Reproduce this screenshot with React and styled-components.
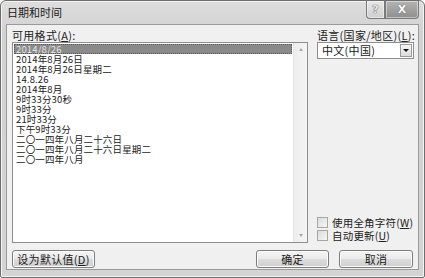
import React from "react";
import styled, { createGlobalStyle } from "styled-components";

const Global = createGlobalStyle`
  html, body { margin: 0; padding: 0; background: #ffffff; }
  body { font-family: "Noto Sans CJK SC", "Liberation Sans", sans-serif; }
  * { box-sizing: border-box; }
`;

const Window = styled.div`
  width: 425px;
  height: 278px;
  border: 1px solid #6e6e6e;
  border-radius: 6px 6px 2px 2px;
  background: linear-gradient(#dedede, #d2d2d2 30px, #d4d4d4);
  display: flex;
  flex-direction: column;
  box-shadow: inset 0 0 0 1px #f4f4f4;
`;

const TitleBar = styled.div`
  height: 23px;
  display: flex;
  align-items: flex-start;
  padding-left: 6px;
`;

const Title = styled.div`
  font-size: 11px;
  line-height: 12px;
  color: #1a1a1a;
  margin-top: 5px;
`;

const Controls = styled.div`
  margin-left: auto;
  margin-right: 5px;
  display: flex;
`;

const CapButton = styled.div`
  width: ${(p) => p.$w}px;
  height: 18px;
  border: 1px solid #7a7a7a;
  border-top: none;
  background: ${(p) => p.$bg};
  display: flex;
  align-items: center;
  justify-content: center;
  border-radius: ${(p) => p.$r};
  box-shadow: inset 0 0 0 1px rgba(255,255,255,0.45);
  font-family: "DejaVu Sans", sans-serif;
  font-weight: bold;
  font-size: ${(p) => p.$fs}px;
  line-height: 12px;
  color: ${(p) => p.$c};
  text-shadow: ${(p) => p.$ts};
`;

const Client = styled.div`
  flex: 1;
  margin: 0 5px 7px 5px;
  background: #f0f0f0;
  border: 1px solid #9a9a9a;
  padding: 2px 5px 0 5px;
  display: flex;
  flex-direction: column;
`;

const Main = styled.div`
  display: flex;
  gap: 9px;
`;

const LeftCol = styled.div`
  width: 296px;
  display: flex;
  flex-direction: column;
`;

const RightCol = styled.div`
  width: 97px;
  display: flex;
  flex-direction: column;
`;

const Label = styled.div`
  font-size: 11px;
  line-height: 12px;
  height: 13px;
  color: #222;
  margin-top: 2px;
  white-space: nowrap;
  letter-spacing: 0.3px;
`;

const U = styled.span`
  text-decoration: underline;
`;

const ListBox = styled.div`
  width: 296px;
  height: 201px;
  border: 1px solid #8e8e8e;
  background: #ffffff;
  display: flex;
`;

const Items = styled.div`
  flex: 1;
  padding: 1px 1px 0 1px;
  display: flex;
  flex-direction: column;
`;

const Item = styled.div`
  height: 10px;
  line-height: 10px;
  font-size: 9.5px;
  padding-left: 2px;
  color: ${(p) => (p.$sel ? "#e4e4e4" : "#1a1a1a")};
  background: ${(p) => (p.$sel ? "#8a8a8a" : "transparent")};
  outline: ${(p) => (p.$sel ? "1px dotted #5a5a5a" : "none")};
  outline-offset: -1px;
  white-space: nowrap;
  letter-spacing: 0.15px;
`;

const ScrollBar = styled.div`
  width: 14px;
  background: linear-gradient(90deg, #ededed, #f4f4f4);
  border-left: 1px solid #e4e4e4;
  display: flex;
  flex-direction: column;
  justify-content: space-between;
  align-items: center;
  padding: 5px 0;
`;

const Arrow = styled.div`
  width: 0;
  height: 0;
  border-left: 2.5px solid transparent;
  border-right: 2.5px solid transparent;
  ${(p) => (p.$up ? "border-bottom: 3px solid #a8a8a8;" : "border-top: 3px solid #a8a8a8;")}
`;

const Combo = styled.div`
  height: 17px;
  border: 1px solid #8e8e8e;
  background: #ffffff;
  display: flex;
  align-items: center;
`;

const ComboText = styled.div`
  flex: 1;
  font-size: 11px;
  padding-left: 4px;
  color: #1a1a1a;
  line-height: 15px;
  letter-spacing: 0.3px;
`;

const ComboBtn = styled.div`
  width: 12px;
  height: 13px;
  margin-right: 1px;
  border: 1px solid #9a9a9a;
  background: linear-gradient(#f6f6f6, #dcdcdc);
  display: flex;
  align-items: center;
  justify-content: center;
`;

const DownTri = styled.div`
  width: 0;
  height: 0;
  border-left: 3px solid transparent;
  border-right: 3px solid transparent;
  border-top: 3px solid #111;
`;

const Spacer = styled.div`
  flex: 1;
`;

const CheckRow = styled.div`
  display: flex;
  align-items: center;
  height: 13px;
  gap: 4px;
  color: #222;
  white-space: nowrap;
`;

const CheckText = styled.span`
  font-size: 10.5px;
  line-height: 12px;
  letter-spacing: 0.2px;
`;

const Box = styled.div`
  flex-shrink: 0;
  width: 11px;
  height: 11px;
  border: 1px solid #a6a6a6;
  background: linear-gradient(135deg, #dcdcdc, #f6f6f6);
`;

const Checks = styled.div`
  display: flex;
  flex-direction: column;
  margin-bottom: 1px;
`;

const Bottom = styled.div`
  display: flex;
  margin-top: 7px;
`;

const Button = styled.div`
  width: ${(p) => p.$w}px;
  height: 18px;
  margin-left: ${(p) => p.$ml || 0}px;
  border: 1px solid #7e7e7e;
  border-radius: 3px;
  background: linear-gradient(#f4f4f4 0%, #ebebeb 50%, #dcdcdc 51%, #cfcfcf 100%);
  box-shadow: inset 0 0 0 1px #fbfbfb;
  display: flex;
  align-items: center;
  justify-content: center;
  font-size: 11px;
  line-height: 12px;
  color: #1a1a1a;
  letter-spacing: 0.3px;
`;

const formats = [
  "2014/8/26",
  "2014年8月26日",
  "2014年8月26日星期二",
  "14.8.26",
  "2014年8月",
  "9时33分30秒",
  "9时33分",
  "21时33分",
  "下午9时33分",
  "二〇一四年八月二十六日",
  "二〇一四年八月二十六日星期二",
  "二〇一四年八月",
];

export default function App() {
  return (
    <>
      <Global />
      <Window>
        <TitleBar>
          <Title>日期和时间</Title>
          <Controls>
            <CapButton $w={19} $bg="linear-gradient(#e8e8e8,#cfcfcf)" $r="0 0 0 4px" $fs={11} $c="#e8e8e8" $ts="0 0 1px #555, 0 0 1px #555">?</CapButton>
            <CapButton $w={34} $bg="linear-gradient(#b4b4b4,#8e8e8e)" $r="0 0 4px 0" $fs={11} $c="#fafafa" $ts="0 0 1px #444">X</CapButton>
          </Controls>
        </TitleBar>
        <Client>
          <Main>
            <LeftCol>
              <Label>可用格式(<U>A</U>):</Label>
              <ListBox>
                <Items>
                  {formats.map((f, i) => (
                    <Item key={f} $sel={i === 0}>{f}</Item>
                  ))}
                </Items>
                <ScrollBar>
                  <Arrow $up />
                  <Arrow />
                </ScrollBar>
              </ListBox>
            </LeftCol>
            <RightCol>
              <Label>语言(国家/地区)(<U>L</U>):</Label>
              <Combo>
                <ComboText>中文(中国)</ComboText>
                <ComboBtn><DownTri /></ComboBtn>
              </Combo>
              <Spacer />
              <Checks>
                <CheckRow><Box /><CheckText>使用全角字符(<U>W</U>)</CheckText></CheckRow>
                <CheckRow><Box /><CheckText>自动更新(<U>U</U>)</CheckText></CheckRow>
              </Checks>
            </RightCol>
          </Main>
          <Bottom>
            <Button $w={83}>设为默认值(<U>D</U>)</Button>
            <Button $w={73} $ml={161}>确定</Button>
            <Button $w={74} $ml={10}>取消</Button>
          </Bottom>
        </Client>
      </Window>
    </>
  );
}
